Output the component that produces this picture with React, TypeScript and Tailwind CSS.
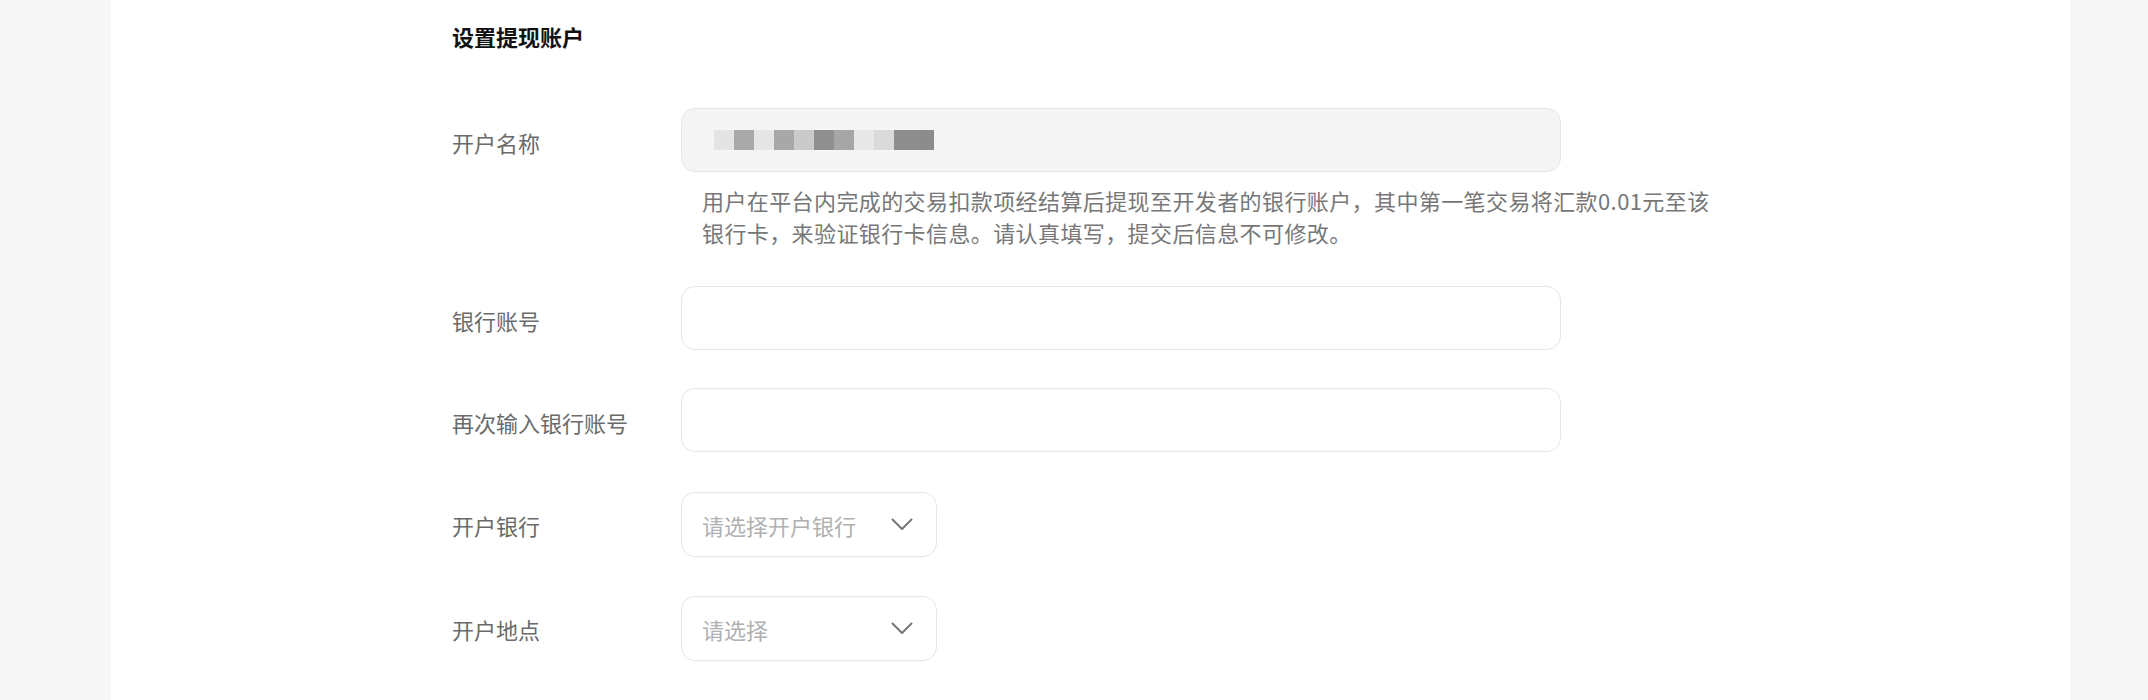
const maskBlocks = [
  "bg-[#e4e4e4]",
  "bg-[#a9a9a9]",
  "bg-[#e6e6e6]",
  "bg-[#a8a8a8]",
  "bg-[#cacaca]",
  "bg-[#8f8f8f]",
  "bg-[#a6a6a6]",
  "bg-[#e8e8e8]",
  "bg-[#dadada]",
  "bg-[#8e8e8e]",
  "bg-[#8c8c8c]",
];

function Label({ text, pad }: { text: string; pad: string }) {
  return (
    <div className={`w-[229px] shrink-0 text-[22px] leading-[32px] text-[#6a6a6a] ${pad}`}>
      {text}
    </div>
  );
}

function TextInput() {
  return (
    <input
      type="text"
      className="w-[880px] h-[64px] rounded-[14px] border border-[#e6e6e6] bg-white px-5 text-[22px] outline-none"
    />
  );
}

function Chevron() {
  return (
    <svg width="22" height="13" viewBox="0 0 22 13" fill="none" className="shrink-0">
      <polyline
        points="1.5,1.5 11,11 20.5,1.5"
        stroke="#777"
        strokeWidth="2"
        strokeLinecap="round"
        strokeLinejoin="round"
      />
    </svg>
  );
}

function SelectBox({ placeholder }: { placeholder: string }) {
  return (
    <button className="w-[256px] h-[65px] rounded-[14px] border border-[#e6e6e6] bg-white flex items-center justify-between pl-[20px] pr-[23px]">
      <span className="text-[22px] leading-[32px] text-[#b0b0b0]">{placeholder}</span>
      <Chevron />
    </button>
  );
}

export default function App() {
  return (
    <div
      className="min-h-[700px] bg-[#f6f6f6] flex"
      style={{ fontFamily: '"Noto Sans CJK SC", "Noto Sans", sans-serif' }}
    >
      <div className="w-[111px] shrink-0" />
      <div className="w-[1959px] shrink-0 bg-white h-[700px] pl-[341px] pt-[21px]">
        <h2 className="text-[22px] leading-[30px] font-bold text-[#111]">
          设置提现账户
        </h2>

        <div className="mt-[57px] flex flex-col">
          {/* 开户名称 */}
          <div className="flex items-start">
            <Label text="开户名称" pad="pt-[18px]" />
            <div className="flex flex-col">
              <div className="w-[880px] h-[64px] rounded-[14px] border border-[#e6e6e6] bg-[#f5f5f5] flex items-center pl-[32px]">
                <div className="flex">
                  {maskBlocks.map((c, i) => (
                    <div key={i} className={`w-[20px] h-[20px] ${c}`} />
                  ))}
                </div>
              </div>
              <p className="mt-[12px] pl-[21px] w-[1060px] text-[22px] leading-[32px] tracking-[0.4px] text-[#777]">
                用户在平台内完成的交易扣款项经结算后提现至开发者的银行账户，其中第一笔交易将汇款0.01元至该
                <br />
                银行卡，来验证银行卡信息。请认真填写，提交后信息不可修改。
              </p>
            </div>
          </div>

          {/* 银行账号 */}
          <div className="mt-[38px] flex items-start">
            <Label text="银行账号" pad="pt-[18px]" />
            <TextInput />
          </div>

          {/* 再次输入银行账号 */}
          <div className="mt-[38px] flex items-start">
            <Label text="再次输入银行账号" pad="pt-[18px]" />
            <TextInput />
          </div>

          {/* 开户银行 */}
          <div className="mt-[40px] flex items-start">
            <Label text="开户银行" pad="pt-[17px]" />
            <SelectBox placeholder="请选择开户银行" />
          </div>

          {/* 开户地点 */}
          <div className="mt-[39px] flex items-start">
            <Label text="开户地点" pad="pt-[17px]" />
            <SelectBox placeholder="请选择" />
          </div>
        </div>
      </div>
    </div>
  );
}
